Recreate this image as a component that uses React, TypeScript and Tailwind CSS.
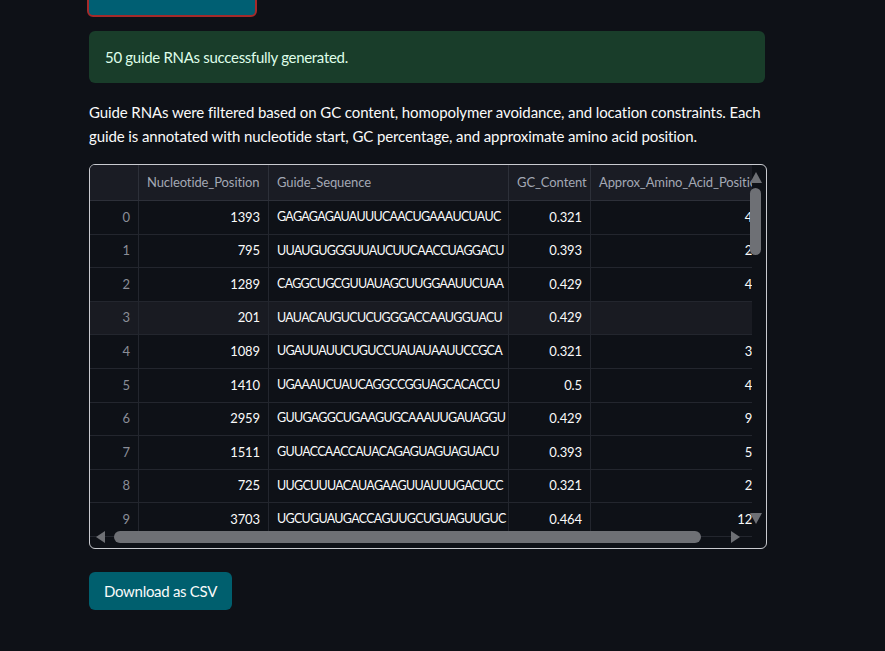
import React from 'react';

type Row = { pos: number; seq: string; gc: string; aa: number };

const rows: Row[] = [
  { pos: 1393, seq: 'GAGAGAGAUAUUUCAACUGAAAUCUAUC', gc: '0.321', aa: 464 },
  { pos: 795, seq: 'UUAUGUGGGUUAUCUUCAACCUAGGACU', gc: '0.393', aa: 265 },
  { pos: 1289, seq: 'CAGGCUGCGUUAUAGCUUGGAAUUCUAA', gc: '0.429', aa: 429 },
  { pos: 201, seq: 'UAUACAUGUCUCUGGGACCAAUGGUACU', gc: '0.429', aa: 67 },
  { pos: 1089, seq: 'UGAUUAUUCUGUCCUAUAUAAUUCCGCA', gc: '0.321', aa: 363 },
  { pos: 1410, seq: 'UGAAAUCUAUCAGGCCGGUAGCACACCU', gc: '0.5', aa: 470 },
  { pos: 2959, seq: 'GUUGAGGCUGAAGUGCAAAUUGAUAGGU', gc: '0.429', aa: 986 },
  { pos: 1511, seq: 'GUUACCAACCAUACAGAGUAGUAGUACU', gc: '0.393', aa: 503 },
  { pos: 725, seq: 'UUGCUUUACAUAGAAGUUAUUUGACUCC', gc: '0.321', aa: 241 },
  { pos: 3703, seq: 'UGCUGUAUGACCAGUUGCUGUAGUUGUC', gc: '0.464', aa: 1234 },
];

const font = { fontFamily: '"Lato", "Noto Sans", sans-serif' };

const App: React.FC = () => {
  return (
    <div className="min-h-[651px] bg-[#0e1117] text-[#fafafa] overflow-hidden" style={font}>
      <div className="pl-[89px] w-[765px]">
        {/* previous button (cut off at top) */}
        <button className="block -mt-[23px] -ml-[2px] h-[40px] w-[170px] rounded-md border-2 border-[#a52a2a] bg-[#005f73]" />

        {/* success message */}
        <div className="mt-[14px] h-[52px] rounded-md bg-[#193d2a] px-4 flex items-center text-[15px] tracking-[-0.3px] text-[#dffde9]">
          50 guide RNAs successfully generated.
        </div>

        <p className="mt-[17px] text-[15px] tracking-[-0.1px] leading-[24px] text-[#fafafa]">
          Guide RNAs were filtered based on GC content, homopolymer avoidance, and location constraints. Each
          guide is annotated with nucleotide start, GC percentage, and approximate amino acid position.
        </p>

        {/* dataframe */}
        <div className="relative mt-[16px] h-[385px] w-[678px] rounded-md border border-[#c9cbd0] overflow-hidden">
          <div className="w-[662px] h-full overflow-hidden">
            <div className="w-[685px] text-[13px] tracking-[-0.1px]">
              <div className="flex h-[36px] bg-[#1a1c24] text-[#a3a8b4] border-b border-[#2d3039]">
                <div className="w-[49px] border-r border-[#2d3039]" />
                <div className="w-[130px] px-2 pt-px flex items-center border-r border-[#2d3039]">Nucleotide_Position</div>
                <div className="w-[240px] px-2 pt-px flex items-center border-r border-[#2d3039]">Guide_Sequence</div>
                <div className="w-[82px] px-2 pt-px flex items-center whitespace-nowrap border-r border-[#2d3039]">GC_Content</div>
                <div className="w-[184px] px-2 pt-px flex items-center whitespace-nowrap overflow-hidden">Approx_Amino_Acid_Position</div>
              </div>
              {rows.map((r, i) => (
                <div
                  key={i}
                  className={`flex h-[33.6px] border-b border-[#23262e] ${i === 3 ? 'bg-[#191b22]' : ''}`}
                >
                  <div className="w-[49px] px-2 flex items-center justify-end text-[#8b8e97] border-r border-[#23262e]">{i}</div>
                  <div className="w-[130px] px-2 flex items-center justify-end border-r border-[#23262e]">{r.pos}</div>
                  <div className="w-[240px] px-2 flex items-center whitespace-nowrap overflow-hidden border-r border-[#23262e] text-[12.5px] tracking-[-0.7px]">{r.seq}</div>
                  <div className="w-[82px] px-2 flex items-center justify-end border-r border-[#23262e]">{r.gc}</div>
                  <div className="w-[184px] px-2 flex items-center justify-end">{r.aa}</div>
                </div>
              ))}
            </div>
          </div>

          {/* vertical scrollbar */}
          <div className="absolute right-[4px] top-[7px] w-[12px] h-[12px] flex items-start justify-center">
            <div className="w-0 h-0 border-l-[6px] border-r-[6px] border-b-[11px] border-l-transparent border-r-transparent border-b-[#6e7075]" />
          </div>
          <div className="absolute right-[5px] top-[23px] w-[11px] h-[67px] rounded-full bg-[#6e7075]" />
          <div className="absolute right-[4px] top-[348px] w-[12px] h-[12px] flex items-start justify-center">
            <div className="w-0 h-0 border-l-[6px] border-r-[6px] border-t-[11px] border-l-transparent border-r-transparent border-t-[#6e7075]" />
          </div>

          {/* horizontal scrollbar */}
          <div className="absolute left-[6px] top-[366px] w-0 h-0 border-t-[6px] border-b-[6px] border-r-[9px] border-t-transparent border-b-transparent border-r-[#6e7075]" />
          <div className="absolute left-[24px] top-[366px] w-[587px] h-[12px] rounded-full bg-[#6e7075]" />
          <div className="absolute left-[641px] top-[366px] w-0 h-0 border-t-[6px] border-b-[6px] border-l-[9px] border-t-transparent border-b-transparent border-l-[#6e7075]" />
        </div>

        <button className="mt-[23px] h-[38px] px-[15px] rounded-md bg-[#005f6e] text-[15px] tracking-[-0.3px] text-[#fafafa]">
          Download as CSV
        </button>
      </div>
    </div>
  );
};

export default App;
